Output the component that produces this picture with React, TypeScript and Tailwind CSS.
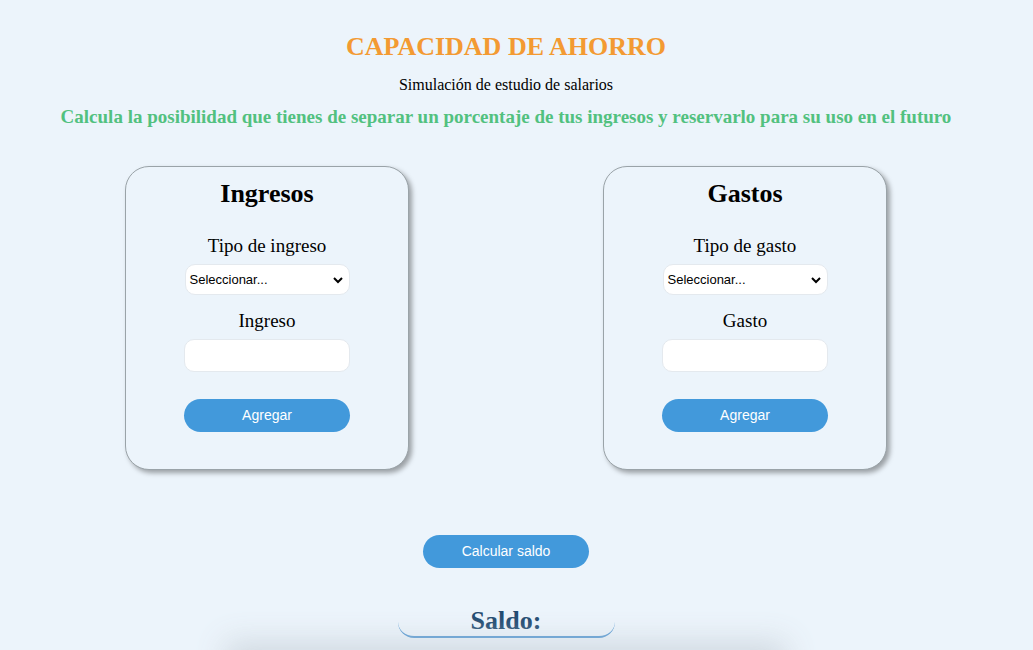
import React from "react";

const serif = { fontFamily: '"Liberation Serif", "Times New Roman", serif' };
const sans = { fontFamily: '"Liberation Sans", Arial, sans-serif' };

function Card({ title, label1, label2 }: { title: string; label1: string; label2: string }) {
  return (
    <div className="w-[284px] h-[304px] rounded-[24px] border border-[#9aa3a8] bg-[#ecf4fb] shadow-[3px_3px_5px_rgba(0,0,0,0.35)] flex flex-col items-center">
      <h2 className="mt-[12px] text-[26px] font-bold leading-[30px] text-black">{title}</h2>
      <div className="mt-[26px] text-[19px] leading-[22px] text-black">{label1}</div>
      <div className="mt-[7px] w-[165px] h-[31px] rounded-[10px] bg-white border border-[#e4e9ee] flex items-center justify-between pl-[4px] pr-[6px]" style={sans}>
        <span className="text-[13px] text-black">Seleccionar...</span>
        <svg width="10" height="8" viewBox="0 0 10 8"><path d="M1 2 L5 6 L9 2" stroke="black" strokeWidth="2" fill="none" /></svg>
      </div>
      <div className="mt-[15px] text-[19px] leading-[22px] text-black">{label2}</div>
      <div className="mt-[7px] w-[166px] h-[33px] rounded-[10px] bg-white border border-[#e4e9ee]" />
      <button className="mt-[27px] w-[166px] h-[33px] rounded-full bg-[#4299db] text-white text-[14px]" style={sans}>Agregar</button>
    </div>
  );
}

export default function App() {
  return (
    <div className="w-[1033px] h-[650px] overflow-hidden bg-[#ecf4fb]">
      <div className="w-[1012px] flex flex-col items-center" style={serif}>
        <h1 className="shrink-0 mt-[32px] text-[26px] leading-[30px] font-bold text-[#f39a32]">CAPACIDAD DE AHORRO</h1>
        <p className="shrink-0 mt-[14px] text-[16px] leading-[18px] text-black">Simulación de estudio de salarios</p>
        <h3 className="shrink-0 mt-[12px] text-[19px] leading-[22px] font-bold text-[#52c17f]">Calcula la posibilidad que tienes de separar un porcentaje de tus ingresos y reservarlo para su uso en el futuro</h3>
        <div className="shrink-0 mt-[38px] flex justify-center gap-[194px]">
          <Card title="Ingresos" label1="Tipo de ingreso" label2="Ingreso" />
          <Card title="Gastos" label1="Tipo de gasto" label2="Gasto" />
        </div>
        <button className="shrink-0 mt-[65px] w-[166px] h-[33px] rounded-full bg-[#4299db] text-white text-[14px]" style={sans}>Calcular saldo</button>
        <div className="shrink-0 mt-[36px] w-[217px] h-[34px] rounded-b-[16px] border-b-2 border-[#4a92d0] flex items-end justify-center">
          <span className="text-[26px] leading-[30px] font-bold text-[#1f4a70]">Saldo:</span>
        </div>
        <div className="shrink-0 mt-[14px] w-[540px] h-[60px] bg-[#e2e9ef] shadow-[0_0_30px_10px_rgba(205,214,222,0.9)]" />
      </div>
    </div>
  );
}
